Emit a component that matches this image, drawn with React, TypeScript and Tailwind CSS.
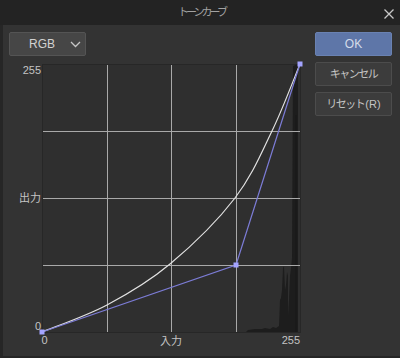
import React from 'react';

// sampled points of the tone curve (page coords)
const curvePts: [number, number][] = [
  [42, 332],
  [107, 305],
  [170, 264],
  [235, 198],
  [272, 131],
  [300, 64],
];

function catmull(pts: [number, number][]) {
  let d = `M${pts[0][0]} ${pts[0][1]}`;
  for (let i = 0; i < pts.length - 1; i++) {
    const p0 = pts[i - 1] || pts[i];
    const p1 = pts[i];
    const p2 = pts[i + 1];
    const p3 = pts[i + 2] || p2;
    const c1x = p1[0] + (p2[0] - p0[0]) / 6;
    const c1y = p1[1] + (p2[1] - p0[1]) / 6;
    const c2x = p2[0] - (p3[0] - p1[0]) / 6;
    const c2y = p2[1] - (p3[1] - p1[1]) / 6;
    d += ` C${c1x} ${c1y} ${c2x} ${c2y} ${p2[0]} ${p2[1]}`;
  }
  return d;
}

const histo =
  '246,332 248,330 255,329 262,329 265,328 270,329 273,327 276,328 279,326 280,300 281,298 282,290 283,268 284,266 285,290 286,285 287,272 288,276 288,316 289,300 290,276 291,268 292,258 293,66 298,64 298,332';

function Chart() {
  const grid = '#a9a9a9';
  return (
    <svg width={307} height={294} viewBox="3 58 307 294" className="block">
      <rect x={42.5} y={64.5} width={258} height={268} fill="#2f2f2f" stroke="#272727" />
      <polygon points={histo} fill="#1d1d1d" />
      <line x1={296} y1={115} x2={296} y2={332} stroke="#181818" />
      {[107.5, 171.5, 236.5].map((x) => (
        <line key={x} x1={x} y1={65} x2={x} y2={332} stroke={grid} />
      ))}
      <line x1={43} y1={131.5} x2={300} y2={131.5} stroke={grid} />
      <line x1={43} y1={198.5} x2={300} y2={198.5} stroke={grid} />
      <line x1={43} y1={265.5} x2={300} y2={265.5} stroke={grid} />
      <path d={catmull(curvePts)} fill="none" stroke="#e2e2e2" strokeWidth={1.2} />
      <polyline points="42,332 236,265 300,64" fill="none" stroke="#7c7cd6" strokeWidth={1.2} />
      {[
        [42, 332],
        [236, 265],
        [300, 64],
      ].map(([x, y]) => (
        <rect key={x} x={x - 2.5} y={y - 2.5} width={5} height={5} fill="#a4a4ff" />
      ))}
      <g fill="#c4c4c4" fontSize={11} fontFamily="'Liberation Sans', 'Noto Sans CJK JP', sans-serif">
        <text x={41} y={74} textAnchor="end">255</text>
        <text x={41} y={202} textAnchor="end">出力</text>
        <text x={41} y={329.5} textAnchor="end">0</text>
        <text x={44.5} y={344} textAnchor="middle">0</text>
        <text x={171} y={344.5} textAnchor="middle">入力</text>
        <text x={300} y={344} textAnchor="end">255</text>
      </g>
    </svg>
  );
}

export default function App() {
  return (
    <div
      className="w-[400px] h-[358px] flex flex-col bg-[#222] overflow-hidden"
      style={{ fontFamily: "'Liberation Sans', 'Noto Sans CJK JP', sans-serif" }}
    >
      <div className="h-[25px] shrink-0 flex items-center relative bg-[#232323]">
        <div className="flex-1 text-center text-[11px] tracking-[-3px] text-[#a2a2a2] leading-none pl-[3px]">
          トーンカーブ
        </div>
        <svg className="absolute right-[6px] top-[9px]" width={10} height={10} viewBox="0 0 10 10">
          <path d="M0.5 0.5 L9.5 9.5 M9.5 0.5 L0.5 9.5" stroke="#c8c8c8" strokeWidth={1.3} />
        </svg>
      </div>
      <div className="flex-1 flex bg-[#333333] border-l-[3px] border-b-[2px] border-[#262626]">
        <div className="flex flex-col w-[307px]">
          <div className="ml-[6px] mt-[7px] w-[77px] h-[24px] flex items-center rounded-[2px] bg-[#464646] border border-[#545454]">
            <span className="flex-1 text-center text-[12px] text-[#d2d2d2] pl-[4px]">RGB</span>
            <svg className="mr-[4px]" width={11} height={7} viewBox="0 0 11 7">
              <path d="M1 1 L5.5 5.5 L10 1" fill="none" stroke="#c6c6c6" strokeWidth={1.3} />
            </svg>
          </div>
          <div className="mt-[2px]">
            <Chart />
          </div>
        </div>
        <div className="ml-[5px] mt-[7px] flex flex-col gap-[6px] w-[77px]">
          <button className="h-[24px] rounded-[2px] bg-[#5e76a8] border border-[#6a82b2] text-[12px] text-[#d4dcea]">
            OK
          </button>
          <button className="h-[24px] rounded-[2px] bg-[#3c3c3c] border border-[#4c4c4c] text-[11px] tracking-[-1.5px] text-[#c4c4c4]">
            キャンセル
          </button>
          <button className="h-[24px] rounded-[2px] bg-[#3c3c3c] border border-[#4c4c4c] text-[11px] text-[#c4c4c4]">
            <span className="tracking-[-1.5px]">リセット</span>
            <span className="ml-[1px]">(R)</span>
          </button>
        </div>
      </div>
    </div>
  );
}
